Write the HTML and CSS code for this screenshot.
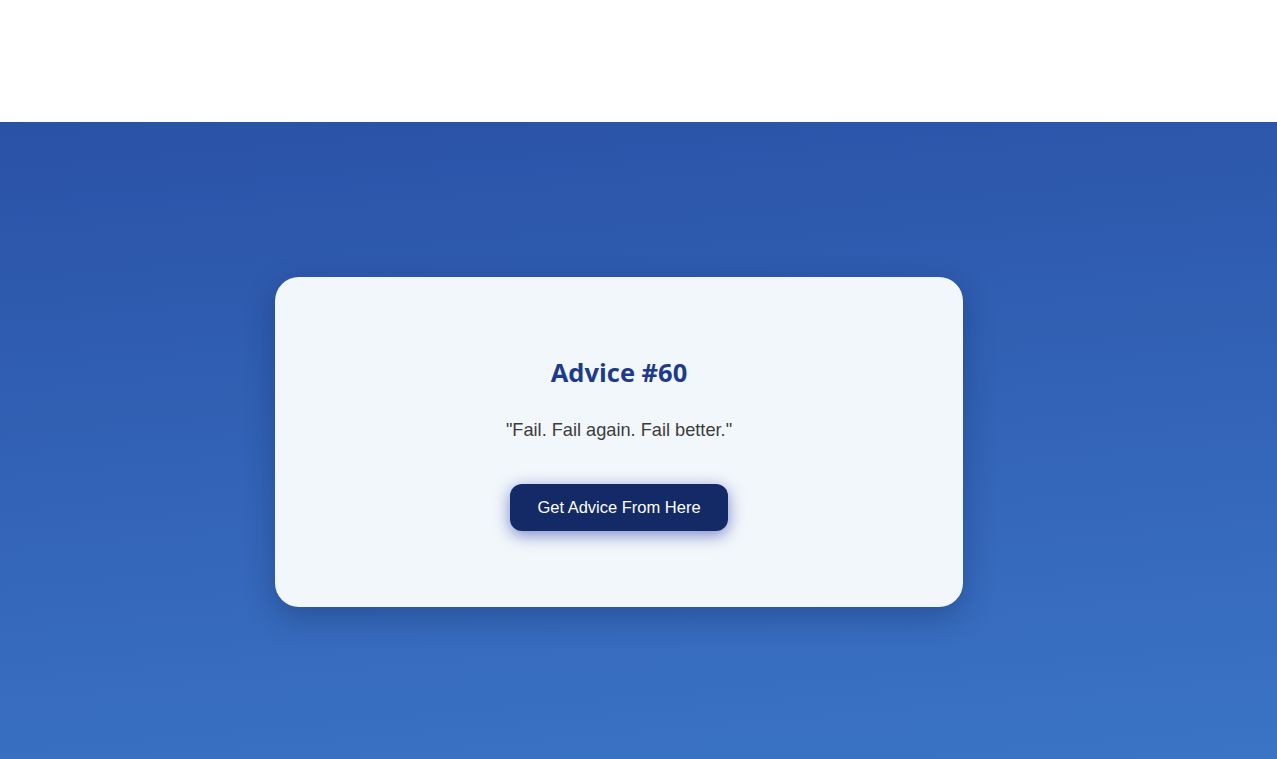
FILE: index.html
```html
<!DOCTYPE html>
<html lang="en">
<head>
<meta charset="utf-8">
<title>Advice Generator</title>
<link rel="stylesheet" href="styles.css">
</head>
<body>
<header class="top"></header>
<main class="stage">
  <section class="card">
    <h1 class="title">Advice #60</h1>
    <p class="quote">"Fail. Fail again. Fail better."</p>
    <button class="btn">Get Advice From Here</button>
  </section>
</main>
</body>
</html>
```
FILE: styles.css
```css
* { box-sizing: border-box; }
html, body { margin: 0; padding: 0; }
body {
  font-family: "Liberation Sans", Arial, sans-serif;
  background: #ffffff;
  height: 759px;
  overflow: hidden;
  display: flex;
  flex-direction: column;
}
.top {
  height: 122px;
  background: #ffffff;
  flex: none;
}
.stage {
  flex: 1;
  background: linear-gradient(175deg, #2a52a7 0%, #3b74c5 100%);
  display: flex;
  align-items: center;
  justify-content: center;
  padding-right: 39px;
  padding-top: 3px;
}
.card {
  width: 688px;
  height: 330px;
  background: #f2f7fb;
  border-radius: 24px;
  box-shadow: 0 10px 30px rgba(10, 25, 70, 0.3);
  display: flex;
  flex-direction: column;
  align-items: center;
  padding-top: 79px;
}
.title {
  margin: 0;
  font-family: "Open Sans", "Noto Sans", sans-serif;
  font-weight: 700;
  font-size: 25.5px;
  line-height: 32px;
  color: #1e3a8a;
}
.quote {
  margin: 30px 0 0;
  font-size: 18.2px;
  line-height: 24px;
  color: #3d3d3d;
}
.btn {
  margin-top: 42px;
  width: 218px;
  height: 47px;
  border: none;
  border-radius: 12px;
  background: #142a66;
  color: #ffffff;
  font-family: "Liberation Sans", Arial, sans-serif;
  font-size: 16.5px;
  box-shadow: 0 4px 16px rgba(40, 60, 170, 0.6);
  cursor: pointer;
}
```
